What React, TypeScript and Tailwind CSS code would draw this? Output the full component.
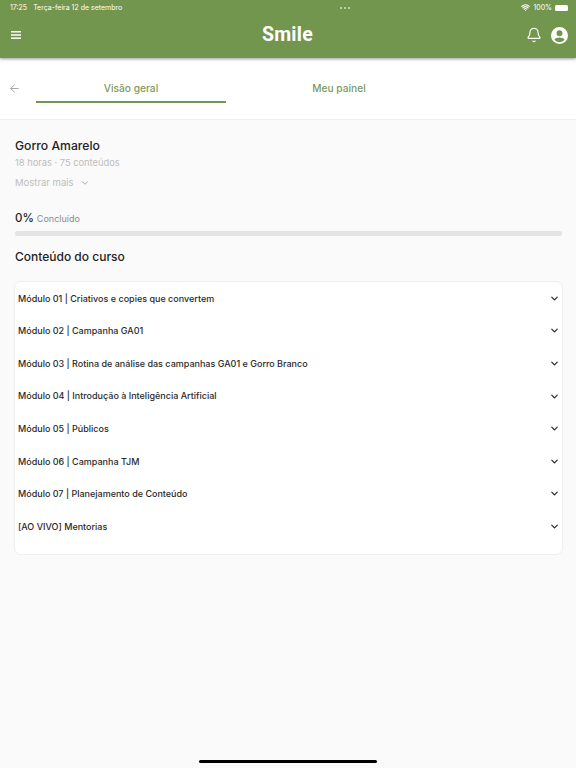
import { Bell, ArrowLeft, ChevronDown, Wifi } from "lucide-react";

const modules = [
  "Módulo 01 | Criativos e copies que convertem",
  "Módulo 02 | Campanha GA01",
  "Módulo 03 | Rotina de análise das campanhas GA01 e Gorro Branco",
  "Módulo 04 | Introdução à Inteligência Artificial",
  "Módulo 05 | Públicos",
  "Módulo 06 | Campanha TJM",
  "Módulo 07 | Planejamento de Conteúdo",
  "[AO VIVO] Mentorias",
];

export default function App() {
  return (
    <div className="relative flex h-[768px] w-[576px] flex-col overflow-hidden bg-[#fafafa] font-['Inter','Liberation_Sans',sans-serif]">
      <header className="relative z-10 flex h-[58px] flex-col bg-[#73964f] text-white shadow-[0_1px_3px_rgba(0,0,0,0.4)]">
        <div className="flex h-[14px] items-center justify-between pl-[10px] pr-[8px] pt-[1px] text-[7px] leading-none">
          <div className="flex gap-[6px]">
            <span>17:25</span>
            <span>Terça-feira 12 de setembro</span>
          </div>
          <div className="flex gap-[2px] pl-[46px]">
            <span className="h-[2px] w-[2px] rounded-full bg-white/70" />
            <span className="h-[2px] w-[2px] rounded-full bg-white/70" />
            <span className="h-[2px] w-[2px] rounded-full bg-white/70" />
          </div>
          <div className="flex items-center gap-[3px]">
            <Wifi size={9} strokeWidth={3} />
            <span>100%</span>
            <span className="h-[6px] w-[13px] rounded-[1.5px] bg-white" />
          </div>
        </div>
        <div className="flex flex-1 items-center justify-between pb-[2px] pl-[11px] pr-[8px]">
          <svg width="10" height="8" viewBox="0 0 10 8" fill="white">
            <rect width="10" height="1.5" y="0" />
            <rect width="10" height="1.5" y="3.2" />
            <rect width="10" height="1.5" y="6.4" />
          </svg>
          <span className="pl-[28px] font-['Roboto','Inter',sans-serif] text-[19.5px] font-bold tracking-[0.3px]">Smile</span>
          <div className="flex items-center gap-[9px]">
            <Bell size={16} strokeWidth={1.7} />
            <svg width="17" height="17" viewBox="0 0 24 24" fill="white">
              <path d="M12 0a12 12 0 1 0 0 24 12 12 0 0 0 0-24Zm0 4.5a4.2 4.2 0 1 1 0 8.4 4.2 4.2 0 0 1 0-8.4Zm0 17a9.4 9.4 0 0 1-7.3-3.4c.9-2 4.3-3.2 7.3-3.2s6.4 1.2 7.3 3.2a9.4 9.4 0 0 1-7.3 3.4Z" />
            </svg>
          </div>
        </div>
      </header>

      <nav className="flex h-[62px] border-b border-[#eeeeee] bg-white pl-[8px]">
        <div className="flex w-[28px] items-center">
          <ArrowLeft size={13} strokeWidth={1.4} className="text-[#8f8f8f]" />
        </div>
        <div className="flex h-[45px] w-[190px] items-center justify-center self-start border-b-2 border-[#73964f] pt-[18px] text-[10.2px] font-medium text-[#7d9a62]">
          Visão geral
        </div>
        <div className="flex h-[45px] w-[226px] items-center justify-center self-start border-b-2 border-transparent pt-[18px] text-[10.2px] font-medium text-[#7d9a62]">
          Meu painel
        </div>
      </nav>

      <main className="flex flex-1 flex-col pl-[14px] pt-[18px]">
        <h1 className="pl-[1px] text-[12.2px] font-medium leading-[15px] text-[#222222]">Gorro Amarelo</h1>
        <p className="mt-[3px] pl-[1px] text-[9.3px] leading-[14px] text-[#bdbdbd]">18 horas · 75 conteúdos</p>
        <div className="mt-[6px] flex items-center gap-[6px] pl-[1px] text-[9.5px] leading-[14px] text-[#bdbdbd]">
          Mostrar mais
          <ChevronDown size={10} strokeWidth={2} className="text-[#9a9a9a]" />
        </div>

        <div className="mt-[21px] flex items-baseline gap-[3px] pl-[1px]">
          <span className="text-[11.5px] font-medium leading-[15px] text-[#222222]">0%</span>
          <span className="text-[9px] text-[#8a8a8a]">Concluído</span>
        </div>
        <div className="ml-[1px] mt-[5px] h-[5px] w-[547px] rounded-[2px] bg-[#e4e4e4]" />

        <h2 className="mt-[13px] pl-[1px] text-[12px] font-medium leading-[16px] text-[#222222]">Conteúdo do curso</h2>

        <section className="mt-[16px] flex h-[274px] w-[549px] flex-col rounded-[7px] border border-[#eeeeee] bg-white pl-[3px] pr-[2px]">
          {modules.map((m) => (
            <div key={m} className="flex h-[32.6px] items-center justify-between text-[9px] font-medium text-[#2a2a2a]">
              <span>{m}</span>
              <ChevronDown size={11} strokeWidth={2.5} className="text-[#222222]" />
            </div>
          ))}
        </section>
      </main>

      <div className="absolute bottom-[5px] left-[199px] h-[3px] w-[178px] rounded-full bg-black" />
    </div>
  );
}
